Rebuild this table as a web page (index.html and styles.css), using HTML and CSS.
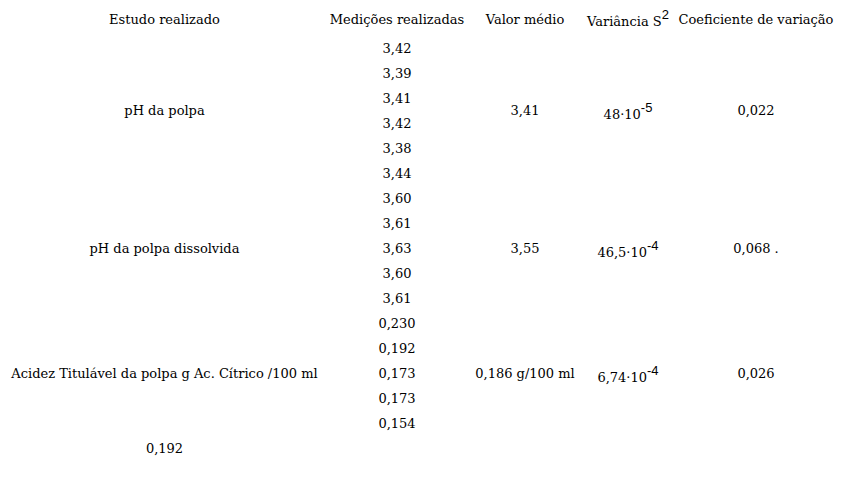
FILE: index.html
```html
<!DOCTYPE html>
<html lang="pt">
<head>
<meta charset="utf-8">
<title>Tabela</title>
<link rel="stylesheet" href="styles.css">
</head>
<body>
<table class="data">
<colgroup>
<col class="c1"><col class="c2"><col class="c3"><col class="c4"><col class="c5">
</colgroup>
<thead>
<tr class="head">
<th>Estudo realizado</th>
<th>Medições realizadas</th>
<th>Valor médio</th>
<th class="var">Variância S<sup>2</sup></th>
<th>Coeficiente de variação</th>
</tr>
</thead>
<tbody>
<tr><td rowspan="6">pH da polpa</td><td>3,42</td><td rowspan="6">3,41</td><td rowspan="6" class="var">48·10<sup>-5</sup></td><td rowspan="6">0,022</td></tr>
<tr><td>3,39</td></tr>
<tr><td>3,41</td></tr>
<tr><td>3,42</td></tr>
<tr><td>3,38</td></tr>
<tr><td>3,44</td></tr>
<tr><td rowspan="5">pH da polpa dissolvida</td><td>3,60</td><td rowspan="5">3,55</td><td rowspan="5" class="var">46,5·10<sup>-4</sup></td><td rowspan="5">0,068 .</td></tr>
<tr><td>3,61</td></tr>
<tr><td>3,63</td></tr>
<tr><td>3,60</td></tr>
<tr><td>3,61</td></tr>
<tr><td rowspan="5">Acidez Titulável da polpa g Ac. Cítrico /100 ml</td><td>0,230</td><td rowspan="5">0,186 g/100 ml</td><td rowspan="5" class="var">6,74·10<sup>-4</sup></td><td rowspan="5">0,026</td></tr>
<tr><td>0,192</td></tr>
<tr><td>0,173</td></tr>
<tr><td>0,173</td></tr>
<tr><td>0,154</td></tr>
<tr><td>0,192</td><td></td><td></td><td></td><td></td></tr>
</tbody>
</table>
</body>
</html>
```
FILE: styles.css
```css
html, body {
  margin: 0;
  padding: 0;
  background: #ffffff;
}
body {
  font-family: "DejaVu Serif", "Liberation Serif", serif;
  font-size: 13px;
  color: #000000;
}
.data {
  border-collapse: collapse;
  table-layout: fixed;
  width: 841px;
}
.c1 { width: 329px; }
.c2 { width: 136px; }
.c3 { width: 120px; }
.c4 { width: 86px; }
.c5 { width: 170px; }
.data th,
.data td {
  padding: 0;
  text-align: center;
  vertical-align: middle;
  font-weight: normal;
  white-space: nowrap;
  line-height: 16px;
}
.data td {
  height: 25px;
}
.head th {
  height: 36px;
  padding-top: 4px;
  box-sizing: border-box;
}
.data sup {
  font-family: "Liberation Sans", Arial, sans-serif;
  font-size: 13px;
  line-height: 0;
  vertical-align: 7px;
}
.data td.var,
.data th.var {
  padding-top: 8px;
}
```
